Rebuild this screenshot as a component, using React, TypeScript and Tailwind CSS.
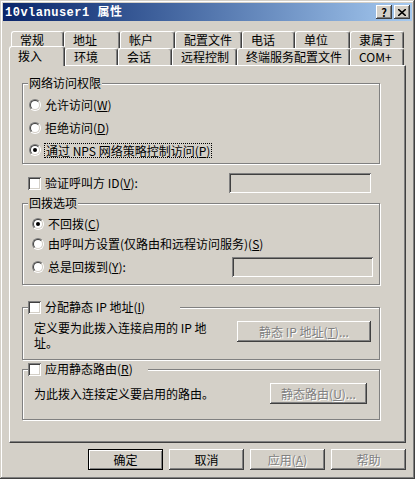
import React from "react";

const raised =
  "shadow-[inset_-1px_-1px_0_#404040,inset_1px_1px_0_#ffffff,inset_-2px_-2px_0_#808080,inset_2px_2px_0_#d4d0c8]";
const sunken =
  "shadow-[inset_1px_1px_0_#808080,inset_-1px_-1px_0_#ffffff,inset_2px_2px_0_#404040,inset_-2px_-2px_0_#d4d0c8]";
const dis = "text-[#808080] [text-shadow:1px_1px_0_#ffffff]";

function Radio({ checked }: { checked?: boolean }) {
  return (
    <span className="inline-block w-[12px] h-[12px] shrink-0 rounded-full border border-t-[#808080] border-l-[#808080] border-b-white border-r-white">
      <span className="flex items-center justify-center w-full h-full rounded-full border border-t-[#404040] border-l-[#404040] border-b-[#d4d0c8] border-r-[#d4d0c8] bg-white">
        {checked && <span className="block w-[4px] h-[4px] rounded-full bg-black" />}
      </span>
    </span>
  );
}

function Check() {
  return <span className={"inline-block w-[13px] h-[13px] shrink-0 bg-white " + sunken} />;
}

function Tab({ label, cls }: { label: string; cls: string }) {
  return (
    <div
      className={
        "h-full shrink-0 flex items-center pl-[8px] border-l border-t border-r border-white border-r-[#404040] rounded-t-[3px] shadow-[inset_-1px_0_0_#808080] whitespace-nowrap " +
        cls
      }
    >
      {label}
    </div>
  );
}

function TitleBtn({ children }: { children: React.ReactNode }) {
  return (
    <div
      className={
        "w-[16px] h-[14px] bg-[#d4d0c8] flex items-center justify-center text-black text-[11px] font-bold leading-none " +
        raised
      }
    >
      {children}
    </div>
  );
}

function Btn({
  children,
  disabled,
  def,
}: {
  children: React.ReactNode;
  disabled?: boolean;
  def?: boolean;
}) {
  return (
    <div
      className={
        "w-[75px] h-[21px] flex items-center justify-center " +
        (def
          ? "border border-black shadow-[inset_1px_1px_0_#ffffff,inset_-1px_-1px_0_#808080] "
          : raised + " ") +
        (disabled ? dis : "text-black")
      }
    >
      {children}
    </div>
  );
}

export default function App() {
  return (
    <div
      className={
        "w-[415px] h-[479px] bg-[#d4d0c8] pt-[3px] px-[3px] text-[12px] leading-[14px] text-black font-['Noto_Sans_CJK_SC','Noto_Sans',sans-serif] " +
        "shadow-[inset_-1px_-1px_0_#404040,inset_1px_1px_0_#d4d0c8,inset_-2px_-2px_0_#808080,inset_2px_2px_0_#ffffff]"
      }
    >
      {/* Title bar */}
      <div className="h-[18px] flex items-center justify-between pl-[2px] pr-[2px] bg-linear-to-r from-[#0a246a] to-[#a6caf0]">
        <span className="text-white font-bold text-[12px] tracking-[0.5px] font-['Liberation_Mono','Noto_Sans_CJK_SC',monospace]">
          10vlanuser1 <span className="font-['Noto_Sans_CJK_SC',sans-serif]">属性</span>
        </span>
        <div className="flex gap-[2px]">
          <TitleBtn>?</TitleBtn>
          <TitleBtn>
            <svg width="8" height="7" viewBox="0 0 8 7">
              <path d="M0 0 L8 7 M8 0 L0 7" stroke="#000" strokeWidth="1.6" />
            </svg>
          </TitleBtn>
        </div>
      </div>

      <div className="ml-[6px] w-[397px] mt-[10px]">
        {/* Tabs back row */}
        <div className="h-[17px] flex ml-[2px]">
          <Tab label="常规" cls="w-[53px]" />
          <Tab label="地址" cls="w-[56px]" />
          <Tab label="帐户" cls="w-[55px]" />
          <Tab label="配置文件" cls="w-[67px]" />
          <Tab label="电话" cls="w-[53px]" />
          <Tab label="单位" cls="w-[55px]" />
          <Tab label="隶属于" cls="w-[54px]" />
        </div>
        {/* Tabs front row */}
        <div className="h-[17px] flex">
          <div className="relative z-10 w-[56px] h-[20px] -mt-[2px] shrink-0 flex items-center pl-[8px] pb-[1px] bg-[#d4d0c8] border-l border-t border-r border-white border-r-[#404040] rounded-t-[3px] shadow-[inset_-1px_0_0_#808080]">
            拨入
          </div>
          <Tab label="环境" cls="w-[53px]" />
          <Tab label="会话" cls="w-[54px]" />
          <Tab label="远程控制" cls="w-[65px]" />
          <Tab label="终端服务配置文件" cls="w-[113px]" />
          <Tab label="COM+" cls="w-[54px]" />
        </div>

        {/* Panel */}
        <div className="h-[378px] border border-white border-r-[#404040] border-b-[#404040] shadow-[inset_-1px_-1px_0_#808080]">
          {/* Group 1 */}
          <fieldset className="ml-[12px] mt-[10px] w-[358px] border border-[#808080] shadow-[1px_1px_0_#ffffff,inset_1px_1px_0_#ffffff]">
            <legend className="ml-[5px] px-[1px] bg-[#d4d0c8] leading-[14px]">网络访问权限</legend>
            <div className="pt-[4px] pb-[2px]">
              <div className="h-[22px] pl-[6px] flex items-center gap-[4px]">
                <Radio />
                <span>
                  允许访问(<span className="underline">W</span>)
                </span>
              </div>
              <div className="h-[23px] pl-[6px] flex items-center gap-[4px]">
                <Radio />
                <span>
                  拒绝访问(<span className="underline">D</span>)
                </span>
              </div>
              <div className="h-[22px] pl-[6px] flex items-center gap-[3px]">
                <Radio checked />
                <span className="border border-dotted border-black px-[1px] leading-[13px]">
                  通过 NPS 网络策略控制访问(<span className="underline">P</span>)
                </span>
              </div>
            </div>
          </fieldset>

          {/* Verify caller ID */}
          <div className="ml-[12px] mt-[8px] h-[22px] flex items-center">
            <div className="w-[207px] pl-[6px] flex items-center gap-[4px]">
              <Check />
              <span>
                验证呼叫方 ID(<span className="underline">V</span>):
              </span>
            </div>
            <div className={"w-[142px] h-[20px] bg-[#d4d0c8] " + sunken} />
          </div>

          {/* Group 2 */}
          <fieldset className="ml-[12px] mt-[2px] w-[358px] border border-[#808080] shadow-[1px_1px_0_#ffffff,inset_1px_1px_0_#ffffff]">
            <legend className="ml-[5px] px-[1px] bg-[#d4d0c8] leading-[14px]">回拨选项</legend>
            <div className="pt-[4px] pb-[6px]">
              <div className="h-[20px] pl-[9px] flex items-center gap-[4px]">
                <Radio checked />
                <span>
                  不回拨(<span className="underline">C</span>)
                </span>
              </div>
              <div className="h-[20px] pl-[9px] flex items-center gap-[4px]">
                <Radio />
                <span>
                  由呼叫方设置(仅路由和远程访问服务)(<span className="underline">S</span>)
                </span>
              </div>
              <div className="mt-[2px] h-[22px] flex items-center">
                <div className="w-[209px] pl-[9px] flex items-center gap-[4px]">
                  <Radio />
                  <span>
                    总是回拨到(<span className="underline">Y</span>):
                  </span>
                </div>
                <div className={"w-[141px] h-[20px] bg-[#d4d0c8] " + sunken} />
              </div>
            </div>
          </fieldset>

          {/* Group 3 */}
          <fieldset className="ml-[12px] mt-[15px] w-[358px] border border-[#808080] shadow-[1px_1px_0_#ffffff,inset_1px_1px_0_#ffffff]">
            <legend className="ml-[5px] w-[152px] h-[14px] bg-[#d4d0c8] flex items-center gap-[4px]">
              <Check />
              <span>
                分配静态 IP 地址(<span className="underline">I</span>)
              </span>
            </legend>
            <div className="h-[45px] pt-[6px] flex items-start">
              <div className="w-[214px] pl-[11px] leading-[15px]">
                定义要为此拨入连接启用的 IP 地
                <br />
                址。
              </div>
              <div
                className={
                  "mt-[1px] w-[134px] h-[21px] flex items-center justify-center " + raised + " " + dis
                }
              >
                静态 IP 地址(<span className="underline">T</span>)...
              </div>
            </div>
          </fieldset>

          {/* Group 4 */}
          <fieldset className="ml-[12px] mt-[2px] w-[358px] border border-[#808080] shadow-[1px_1px_0_#ffffff,inset_1px_1px_0_#ffffff]">
            <legend className="ml-[5px] w-[120px] h-[14px] bg-[#d4d0c8] flex items-center gap-[4px]">
              <Check />
              <span>
                应用静态路由(<span className="underline">R</span>)
              </span>
            </legend>
            <div className="h-[43px] pt-[7px]">
              <div className="h-[21px] flex items-center">
                <div className="w-[247px] pl-[11px]">为此拨入连接定义要启用的路由。</div>
                <div
                  className={
                    "w-[97px] h-[21px] flex items-center justify-center " + raised + " " + dis
                  }
                >
                  静态路由(<span className="underline">U</span>)...
                </div>
              </div>
            </div>
          </fieldset>
        </div>

        {/* Buttons */}
        <div className="mt-[6px] flex justify-end gap-[6px]">
          <Btn def>确定</Btn>
          <Btn>取消</Btn>
          <Btn disabled>
            应用(<span className="underline">A</span>)
          </Btn>
          <Btn disabled>帮助</Btn>
        </div>
      </div>
    </div>
  );
}
